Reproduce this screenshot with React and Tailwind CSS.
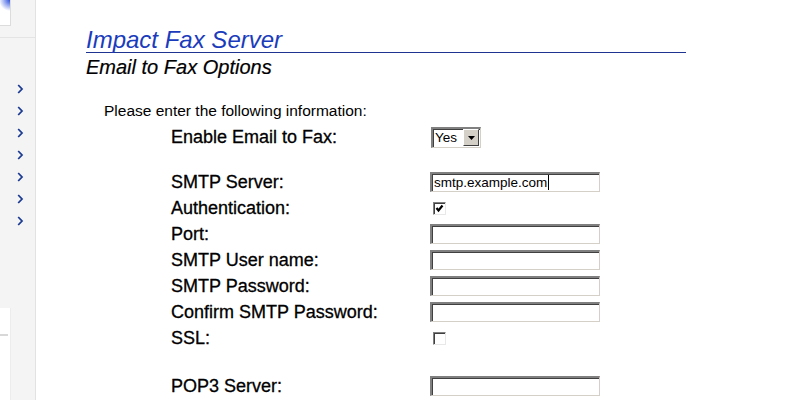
import React from "react";

const font = { fontFamily: '"Liberation Sans", Arial, sans-serif' };

function Chevron() {
    return (
        <svg width="7" height="10" viewBox="0 0 7 10" className="block">
            <path d="M1.2 1 L5 5 L1.2 9" fill="none" stroke="#1c3c94" strokeWidth="1.8" />
        </svg>
    );
}

function TextBox({ value, caret }) {
    return (
        <div className="w-[170px] h-[20px] bg-white border-t-2 border-l-2 border-b border-r border-t-[#808080] border-l-[#808080] border-b-[#d4d0c8] border-r-[#d4d0c8] shadow-[inset_1px_1px_0_#404040] flex items-center pl-[2px] text-[13.5px] leading-none text-black">
            {value}
            {caret && <span className="inline-block w-px h-[15px] bg-black ml-px" />}
        </div>
    );
}

function CheckBox({ checked }) {
    return (
        <div className="ml-[3px] w-[13px] h-[13px] bg-white border border-t-[#808080] border-l-[#808080] border-b-[#e8e8e8] border-r-[#e8e8e8] shadow-[inset_1px_1px_0_#404040] flex items-center justify-center">
            {checked && (
                <svg width="9" height="9" viewBox="0 0 9 9">
                    <path d="M1.5 4 L3.5 6.5 L7.5 1.5" fill="none" stroke="#000" strokeWidth="2.2" />
                </svg>
            )}
        </div>
    );
}

function SelectBox() {
    return (
        <div className="ml-px w-[50px] h-[21px] bg-white border-t-2 border-l-2 border-b border-r border-t-[#808080] border-l-[#808080] border-b-[#d4d0c8] border-r-[#d4d0c8] shadow-[inset_1px_1px_0_#404040] flex items-center">
            <span className="flex-1 pl-[2px] text-[13.5px] leading-none text-black">Yes</span>
            <div className="w-[16px] h-[17px] bg-[#d4d0c8] border border-t-white border-l-white border-b-[#404040] border-r-[#404040] flex items-center justify-center mr-px">
                <svg width="7" height="4" viewBox="0 0 7 4">
                    <path d="M0 0 H7 L3.5 4 Z" fill="#000" />
                </svg>
            </div>
        </div>
    );
}

function Row({ label, children }) {
    return (
        <div className="flex items-center h-[26px]">
            <div className="w-[259px] text-[18px] leading-[26px] text-black [-webkit-text-stroke:0.3px_#000]">{label}</div>
            {children}
        </div>
    );
}

export default function App() {
    const arrows = [0, 1, 2, 3, 4, 5, 6];

    return (
        <div className="flex w-[800px] h-[400px] bg-white overflow-hidden" style={font}>
            {/* left nav strip */}
            <div className="w-[36px] h-full bg-[#f4f4f4] border-r border-[#e2e2e2] flex flex-col">
                <div className="w-[11px] h-[26px] bg-white border-r border-b border-[#dcdcdc] bg-[radial-gradient(circle_at_100%_0%,#2f4fd8_0,#8ea2ee_5px,#ffffff_11px)]" />
                <div className="mt-[11px] h-px bg-[#e4e4e4]" />
                <div className="mt-[46px] flex flex-col gap-[12px] pl-[17px]">
                    {arrows.map((i) => (
                        <Chevron key={i} />
                    ))}
                </div>
                <div className="mt-[82px] w-[11px] flex-1 bg-white border-r border-[#ececec]">
                    <div className="mt-[26px] h-[2px] w-[8px] bg-[#d8d8d8]" />
                </div>
            </div>

            {/* content */}
            <div className="flex-1 pl-[50px] pt-[28px]">
                <div className="w-[600px] h-[25px] border-b border-[#1e3490]">
                    <div className="italic text-[24px] leading-[24px] text-[#1a3cbc]">Impact Fax Server</div>
                </div>
                <div className="mt-[4px] italic text-[20px] leading-[20px] text-black [-webkit-text-stroke:0.2px_#000]">Email to Fax Options</div>

                <div className="mt-[25px] ml-[18px] text-[15.5px] leading-[18px] text-black">
                    Please enter the following information:
                </div>

                <div className="mt-[4px] ml-[85px]">
                    <Row label="Enable Email to Fax:">
                        <SelectBox />
                    </Row>
                    <div className="h-[19px]" />
                    <Row label="SMTP Server:">
                        <TextBox value="smtp.example.com" caret />
                    </Row>
                    <Row label="Authentication:">
                        <CheckBox checked />
                    </Row>
                    <Row label="Port:">
                        <TextBox />
                    </Row>
                    <Row label="SMTP User name:">
                        <TextBox />
                    </Row>
                    <Row label="SMTP Password:">
                        <TextBox />
                    </Row>
                    <Row label="Confirm SMTP Password:">
                        <TextBox />
                    </Row>
                    <Row label="SSL:">
                        <CheckBox />
                    </Row>
                    <div className="h-[22px]" />
                    <Row label="POP3 Server:">
                        <TextBox />
                    </Row>
                </div>
            </div>
        </div>
    );
}
